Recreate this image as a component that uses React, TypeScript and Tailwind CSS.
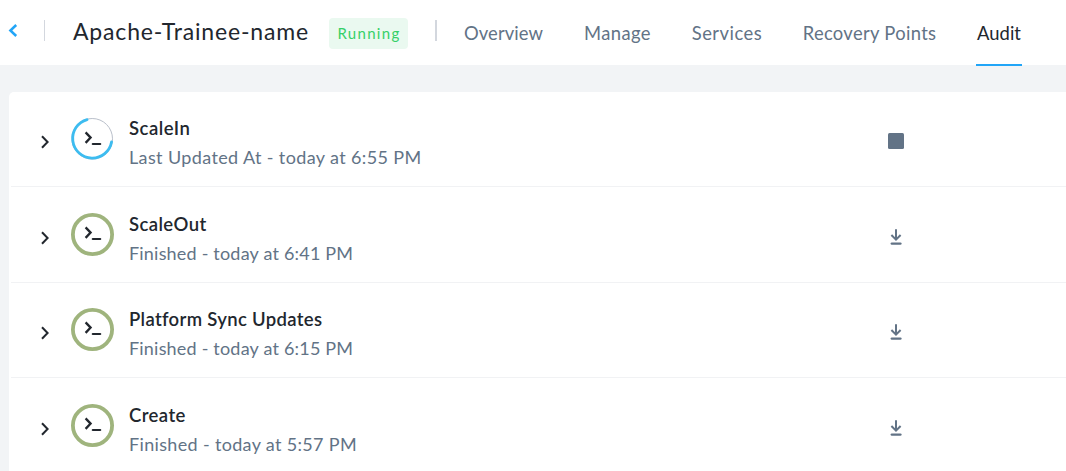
type Status = "running" | "finished";

interface AuditEntry {
  title: string;
  detail: string;
  status: Status;
  height: string;
  offset: string;
  chevronOffset: string;
  textOffset: string;
  titleSpacing: string;
  detailSpacing: string;
}

const tabs = [
  { label: "Overview", width: "w-[80px]", spacing: "tracking-[0.1px]" },
  { label: "Manage", width: "w-[68px]", spacing: "tracking-[0.4px]" },
  { label: "Services", width: "w-[71px]", spacing: "tracking-[0.5px]" },
  { label: "Recovery Points", width: "w-[134px]", spacing: "tracking-[0.32px]" },
  { label: "Audit", width: "w-[46px]", spacing: "tracking-[0px]", active: true },
];

const entries: AuditEntry[] = [
  { title: "ScaleIn", detail: "Last Updated At - today at 6:55 PM", status: "running", height: "h-[95px]", offset: "pt-[25px]", chevronOffset: "mt-[17px]", textOffset: "-mt-[4px]", titleSpacing: "tracking-[0.5px]", detailSpacing: "tracking-[0.38px]" },
  { title: "ScaleOut", detail: "Finished - today at 6:41 PM", status: "finished", height: "h-[96px]", offset: "pt-[25px]", chevronOffset: "mt-[18px]", textOffset: "-mt-[3px]", titleSpacing: "tracking-[0.4px]", detailSpacing: "tracking-[0.2px]" },
  { title: "Platform Sync Updates", detail: "Finished - today at 6:15 PM", status: "finished", height: "h-[95px]", offset: "pt-[24px]", chevronOffset: "mt-[18px]", textOffset: "-mt-[3px]", titleSpacing: "tracking-[0.33px]", detailSpacing: "tracking-[0.2px]" },
  { title: "Create", detail: "Finished - today at 5:57 PM", status: "finished", height: "h-[96px]", offset: "pt-[25px]", chevronOffset: "mt-[18px]", textOffset: "-mt-[3px]", titleSpacing: "tracking-[0.42px]", detailSpacing: "tracking-[0.34px]" },
];

function StatusIcon({ status }: { status: Status }) {
  return (
    <svg className="ml-[21px] h-[44px] w-[44px] shrink-0" viewBox="0 0 44 44" fill="none">
      {status === "finished" ? (
        <circle cx="22.5" cy="22.5" r="19.6" stroke="#9fb47d" strokeWidth="3.8" />
      ) : (
        <>
          <circle cx="22.2" cy="21.8" r="20.3" stroke="#b9bfca" strokeWidth="1" />
          <path d="M17.1 2.6A19.6 19.6 0 1 0 41.6 24.8" stroke="#3dbcf0" strokeWidth="2.8" strokeLinecap="round" />
        </>
      )}
      <path d="M15.6 15.4L20.6 20.6L15.6 25.9" stroke="#22272e" strokeWidth="2.3" />
      <path d="M22.8 27H30.2" stroke="#22272e" strokeWidth="2.2" strokeLinecap="round" />
    </svg>
  );
}

function ActionIcon({ status }: { status: Status }) {
  return (
    <svg className="mt-[16px] ml-auto h-[18px] w-[18px] shrink-0" viewBox="0 0 18 18" fill="none">
      {status === "running" ? (
        <rect x="1" y="0" width="16" height="16" rx="1.5" fill="#627386" />
      ) : (
        <>
          <path d="M9 1.2V11.3M4.4 7L9 11.6L13.6 7" stroke="#627386" strokeWidth="2" />
          <path d="M4.8 15.6H13.4" stroke="#627386" strokeWidth="2.4" strokeLinecap="round" />
        </>
      )}
    </svg>
  );
}

function AuditRow({ entry }: { entry: AuditEntry }) {
  return (
    <li className={`flex items-start border-b border-[#f1f2f4] pr-[161px] pl-[28px] ${entry.height} ${entry.offset}`}>
      <svg className={`h-[15px] w-[10px] shrink-0 ${entry.chevronOffset}`} viewBox="0 0 10 15" fill="none">
        <path d="M3 2.2L8.6 8L3 13.8" stroke="#22272e" strokeWidth="2" />
      </svg>
      <StatusIcon status={entry.status} />
      <div className={`ml-[15px] text-[18px] whitespace-nowrap ${entry.textOffset}`}>
        <div className={`h-[30px] text-[18.5px] leading-[30px] font-semibold text-[#22272e] ${entry.titleSpacing}`}>{entry.title}</div>
        <div className={`h-[30px] leading-[28px] text-[#627386] ${entry.detailSpacing}`}>{entry.detail}</div>
      </div>
      <ActionIcon status={entry.status} />
    </li>
  );
}

export default function App() {
  return (
    <div className="h-[471px] w-full overflow-hidden bg-[#f2f4f6] font-[Lato,sans-serif]">
      <header className="flex h-[65px] items-start bg-white">
        <svg className="mt-[23px] ml-[8px] h-[15px] w-[10px] shrink-0" viewBox="0 0 10 15" fill="none">
          <path d="M8.2 2L2.4 7.5L8.2 13" stroke="#22a5f7" strokeWidth="2.5" />
        </svg>
        <div className="mt-[20px] ml-[26px] h-[21px] w-px shrink-0 bg-[#d3d7de]" />
        <h1 className="mt-[16px] ml-[28px] w-[256px] shrink-0 text-[23px] leading-[30px] tracking-[0.83px] whitespace-nowrap text-[#22272e]">
          Apache-Trainee-name
        </h1>
        <div className="mt-[18px] flex h-[31px] w-[79px] shrink-0 items-center justify-center rounded-[4px] bg-[#eaf9f0] pl-px text-[15px] tracking-[1.3px] text-[#36d068]">
          Running
        </div>
        <div className="mt-[20px] ml-[27px] h-[21px] w-[2px] shrink-0 bg-[#d3d7de]" />
        <nav className="ml-[26px] flex gap-[40px] text-[18.4px] whitespace-nowrap">
          {tabs.map((tab) => (
            <a
              key={tab.label}
              className={`flex h-[66px] shrink-0 justify-center pt-[18px] leading-[30px] ${tab.width} ${tab.spacing} ${
                tab.active ? "border-b-2 border-[#22a5f7] text-[#22272e]" : "pl-px text-[#627386]"
              }`}
            >
              {tab.label}
            </a>
          ))}
        </nav>
      </header>
      <main className="pt-[27px] pl-[9px]">
        <ul className="rounded-tl-[5px] bg-white pl-[2px]">
          {entries.map((entry) => (
            <AuditRow key={entry.title} entry={entry} />
          ))}
        </ul>
      </main>
    </div>
  );
}
